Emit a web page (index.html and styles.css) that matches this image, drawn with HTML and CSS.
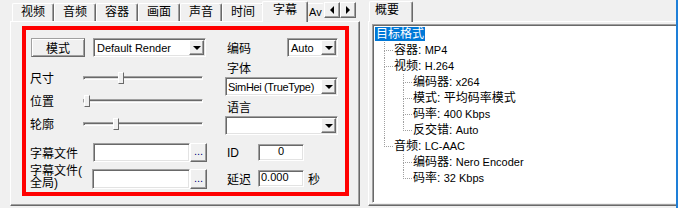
FILE: index.html
```html
<!DOCTYPE html>
<html lang="zh-CN">
<head>
  <meta charset="UTF-8">
  <title>字幕</title>
  <link rel="stylesheet" href="styles.css">
</head>
<body>
  <div class="window">
    <div class="pane left-pane">
      <div class="tabs">
        <div class="tab">视频</div>
        <div class="tab">音频</div>
        <div class="tab">容器</div>
        <div class="tab">画面</div>
        <div class="tab">声音</div>
        <div class="tab">时间</div>
        <div class="tab active">字幕</div>
        <div class="tab cut">Av</div>
        <div class="spin">
          <span class="spin-btn prev"></span>
          <span class="spin-btn next"></span>
        </div>
      </div>
      <div class="panel">
        <div class="frame">
          <div class="col col-main">
            <div class="mode-row">
              <div class="btn mode-btn">模式</div>
              <div class="combo render">
                <span class="combo-val">Default Render</span>
                <span class="drop"></span>
              </div>
            </div>

            <div class="sliders">
              <div class="slider-row">
                <span class="lbl">尺寸</span>
                <div class="track"><span class="thumb" style="left: 34px"></span></div>
              </div>
              <div class="slider-row">
                <span class="lbl">位置</span>
                <div class="track"><span class="thumb" style="left: 0px"></span></div>
              </div>
              <div class="slider-row">
                <span class="lbl">轮廓</span>
                <div class="track"><span class="thumb" style="left: 29px"></span></div>
              </div>
            </div>

            <div class="file-row">
              <span class="file-lbl">字幕文件</span>
              <div class="edit file-edit"></div>
              <div class="btn dots">...</div>
            </div>
            <div class="file-row second">
              <span class="file-lbl two-line">字幕文件(<br>全局)</span>
              <div class="edit file-edit"></div>
              <div class="btn dots">...</div>
            </div>
          </div>

          <div class="col col-side">
            <div class="enc-row">
              <span>编码</span>
              <div class="combo auto">
                <span class="combo-val">Auto</span>
                <span class="drop"></span>
              </div>
            </div>
            <div class="cap">字体</div>
            <div class="combo">
              <span class="combo-val tight">SimHei (TrueType)</span>
              <span class="drop"></span>
            </div>
            <div class="cap">语言</div>
            <div class="combo">
              <span class="combo-val"></span>
              <span class="drop"></span>
            </div>
            <div class="field-row">
              <span class="field-lbl">ID</span>
              <div class="edit num center">0</div>
            </div>
            <div class="field-row second">
              <span class="field-lbl">延迟</span>
              <div class="edit num">0.000</div>
              <span class="unit">秒</span>
            </div>
          </div>
        </div>
      </div>
    </div>

    <div class="pane right-pane">
      <div class="tabs">
        <div class="tab active summary">概要</div>
      </div>
      <div class="panel">
        <ul class="tree">
          <li>
            <span class="sel">目标格式</span>
            <ul>
              <li><span class="k">容器:</span> <span class="v">MP4</span></li>
              <li><span class="k">视频:</span> <span class="v">H.264</span>
                <ul>
                  <li><span class="k">编码器:</span> <span class="v">x264</span></li>
                  <li><span class="k">模式:</span> <span class="k">平均码率模式</span></li>
                  <li><span class="k">码率:</span> <span class="v">400 Kbps</span></li>
                  <li><span class="k">反交错:</span> <span class="v">Auto</span></li>
                </ul>
              </li>
              <li><span class="k">音频:</span> <span class="v">LC-AAC</span>
                <ul>
                  <li><span class="k">编码器:</span> <span class="v">Nero Encoder</span></li>
                  <li><span class="k">码率:</span> <span class="v">32 Kbps</span></li>
                </ul>
              </li>
            </ul>
          </li>
        </ul>
      </div>
    </div>
  </div>
</body>
</html>
```

FILE: styles.css
```css
* {
  box-sizing: border-box;
}

body {
  margin: 0;
  width: 678px;
  height: 208px;
  overflow: hidden;
  background-color: #f0f0f0;
  font-family: "Liberation Sans", "Noto Sans CJK SC", sans-serif;
  font-size: 12px;
  color: #000;
}

.window {
  display: flex;
  height: 208px;
  border-right: 2px solid #1e7fd8;
  overflow: hidden;
}

.pane {
  display: flex;
  flex-direction: column;
  flex-shrink: 0;
}

.left-pane {
  width: 350px;
  margin-left: 10px;
}

.right-pane {
  width: 330px;
  margin-left: 8px;
}

/* tab strip */
.tabs {
  display: flex;
  align-items: flex-end;
  height: 21px;
  padding-left: 2px;
}

.tab {
  height: 18px;
  width: 42px;
  border: 1px solid;
  border-color: #fff #696969 transparent #fff;
  border-bottom: none;
  border-radius: 2px 2px 0 0;
  box-shadow: inset -1px 0 #a0a0a0;
  text-align: center;
  line-height: 16px;
  white-space: nowrap;
}

.tab.active {
  position: relative;
  z-index: 2;
  height: 21px;
  width: 46px;
  margin: 0 -2px -1px;
  background-color: #f0f0f0;
  line-height: 17px;
}

.tab.cut {
  width: 18px;
  padding-left: 2px;
  overflow: hidden;
  text-align: left;
  font-size: 11px;
  border-right-color: transparent;
  box-shadow: none;
}

.tab.summary {
  width: 44px;
  margin-left: -1px;
  text-align: left;
  padding-left: 5px;
}

.spin {
  display: flex;
  align-self: flex-start;
  margin-top: 2px;
}

.spin-btn {
  display: flex;
  align-items: center;
  justify-content: center;
  width: 16px;
  height: 16px;
  background-color: #f0f0f0;
  border: 1px solid;
  border-color: #fff #696969 #696969 #fff;
  box-shadow: inset -1px -1px #a0a0a0;
}

.spin-btn::after {
  content: "";
  border-top: 4px solid transparent;
  border-bottom: 4px solid transparent;
}

.spin-btn.prev::after {
  border-right: 4px solid #000;
}

.spin-btn.next::after {
  border-left: 4px solid #000;
}

/* tab page */
.panel {
  flex: 1;
  margin-bottom: 2px;
  border: 1px solid;
  border-color: #fff #696969 #696969 #fff;
  box-shadow: inset -1px -1px #a0a0a0;
}

.left-pane .panel {
  padding: 4px 0 0 11px;
}

.frame {
  display: flex;
  gap: 18px;
  width: 327px;
  height: 170px;
  padding: 8px 0 0 4px;
  border: 4px solid #ff0000;
}

.col {
  display: flex;
  flex-direction: column;
}

.col-main {
  width: 177px;
}

.col-side {
  width: 113px;
}

/* controls */
.btn {
  display: flex;
  align-items: center;
  justify-content: center;
  background-color: #f0f0f0;
  border: 1px solid;
  border-color: #fff #696969 #696969 #fff;
  box-shadow: inset -1px -1px #a0a0a0;
}

.mode-row {
  display: flex;
  gap: 8px;
  height: 19px;
  padding-left: 1px;
}

.mode-btn {
  width: 54px;
  border-color: #a0a0a0 #696969 #696969 #a0a0a0;
  box-shadow: inset 1px 1px #fff, inset -1px -1px #a0a0a0;
}

.combo {
  display: flex;
  align-items: center;
  height: 19px;
  padding: 1px;
  background-color: #fff;
  border: 1px solid;
  border-color: #a0a0a0 #fff #fff #a0a0a0;
  box-shadow: inset 1px 1px #696969, inset -1px -1px #e3e3e3;
}

.combo.render {
  width: 113px;
}

.combo.auto {
  width: 51px;
}

.combo-val {
  flex: 1;
  padding-left: 2px;
  font-size: 11px;
  white-space: nowrap;
  overflow: hidden;
}

.combo-val.tight {
  padding-left: 1px;
  letter-spacing: -0.35px;
}

.drop {
  display: flex;
  align-items: center;
  justify-content: center;
  flex-shrink: 0;
  width: 15px;
  height: 15px;
  background-color: #f0f0f0;
  border: 1px solid;
  border-color: #fff #696969 #696969 #fff;
  box-shadow: inset -1px -1px #a0a0a0;
}

.drop::after {
  content: "";
  border-top: 4px solid #000;
  border-left: 4px solid transparent;
  border-right: 4px solid transparent;
  margin-top: 1px;
}

.sliders {
  margin-top: 9px;
}

.slider-row {
  display: flex;
  align-items: center;
  height: 23px;
}

.lbl {
  width: 53px;
}

.track {
  position: relative;
  width: 120px;
  height: 4px;
  border: 1px solid;
  border-color: #a0a0a0 #fff #fff #a0a0a0;
  box-shadow: inset 1px 1px #696969;
  background-color: #e3e3e3;
}

.thumb {
  position: absolute;
  top: -5px;
  width: 6px;
  height: 12px;
  background-color: #f0f0f0;
  border: 1px solid;
  border-color: #fff #696969 #696969 #fff;
}

.edit {
  height: 19px;
  background-color: #fff;
  border: 1px solid;
  border-color: #a0a0a0 #fff #fff #a0a0a0;
  box-shadow: inset 1px 1px #696969, inset -1px -1px #e3e3e3;
  font-size: 11px;
  line-height: 15px;
  padding-left: 3px;
}

.file-row {
  display: flex;
  align-items: center;
  height: 19px;
  margin-top: 8px;
}

.file-row.second {
  height: 20px;
  margin-top: 7px;
}

.file-lbl {
  width: 63px;
}

.file-lbl.two-line {
  width: 62px;
  line-height: 12px;
  align-self: flex-start;
  margin-top: -4px;
}

.file-edit {
  width: 97px;
}

.file-row.second .file-edit {
  width: 98px;
  height: 20px;
}

.dots {
  width: 17px;
  height: 19px;
  font-size: 11px;
  line-height: 1;
  padding-bottom: 2px;
  color: #000080;
}

.file-row.second .dots {
  height: 20px;
}

.enc-row {
  display: flex;
  align-items: center;
  justify-content: space-between;
  height: 19px;
  padding-left: 2px;
}

.cap {
  padding: 4px 0 0 2px;
  line-height: 16px;
}

.field-row {
  display: flex;
  align-items: center;
  height: 19px;
  margin-top: 8px;
  padding-left: 2px;
}

.field-row.second {
  margin-top: 7px;
}

.field-lbl {
  width: 31px;
}

.num {
  width: 46px;
  height: 17px;
  line-height: 13px;
  padding-left: 2px;
}

.num.center {
  text-align: center;
  padding-left: 0;
}

.unit {
  margin-left: 4px;
}

/* summary tree */
.right-pane .panel {
  padding: 2px 0 0 3px;
}

.tree {
  height: 179px;
  margin: 0;
  padding: 1px 0 0 2px;
  list-style: none;
  background-color: #fff;
  border: 1px solid;
  border-color: #a0a0a0 #fff #fff #a0a0a0;
  box-shadow: inset 1px 1px #696969;
}

.tree ul {
  margin: 0 0 0 9px;
  padding: 0;
  list-style: none;
}

.tree li {
  position: relative;
  line-height: 16px;
  white-space: nowrap;
}

.tree ul li {
  padding-left: 10px;
}

.tree ul li::before {
  content: "";
  position: absolute;
  left: 0;
  top: 0;
  width: 8px;
  height: 8px;
  border-left: 1px dotted #a0a0a0;
  border-bottom: 1px dotted #a0a0a0;
}

.tree ul li::after {
  content: "";
  position: absolute;
  left: 0;
  top: 8px;
  bottom: 0;
  border-left: 1px dotted #a0a0a0;
}

.tree ul li:last-child::after {
  display: none;
}

.sel {
  display: inline-block;
  height: 14px;
  margin-top: 1px;
  padding: 0 1px;
  line-height: 14px;
  vertical-align: top;
  background-color: #0078d7;
  color: #fff;
}

.k {
  font-size: 12px;
}

.v {
  font-size: 11px;
}
```
